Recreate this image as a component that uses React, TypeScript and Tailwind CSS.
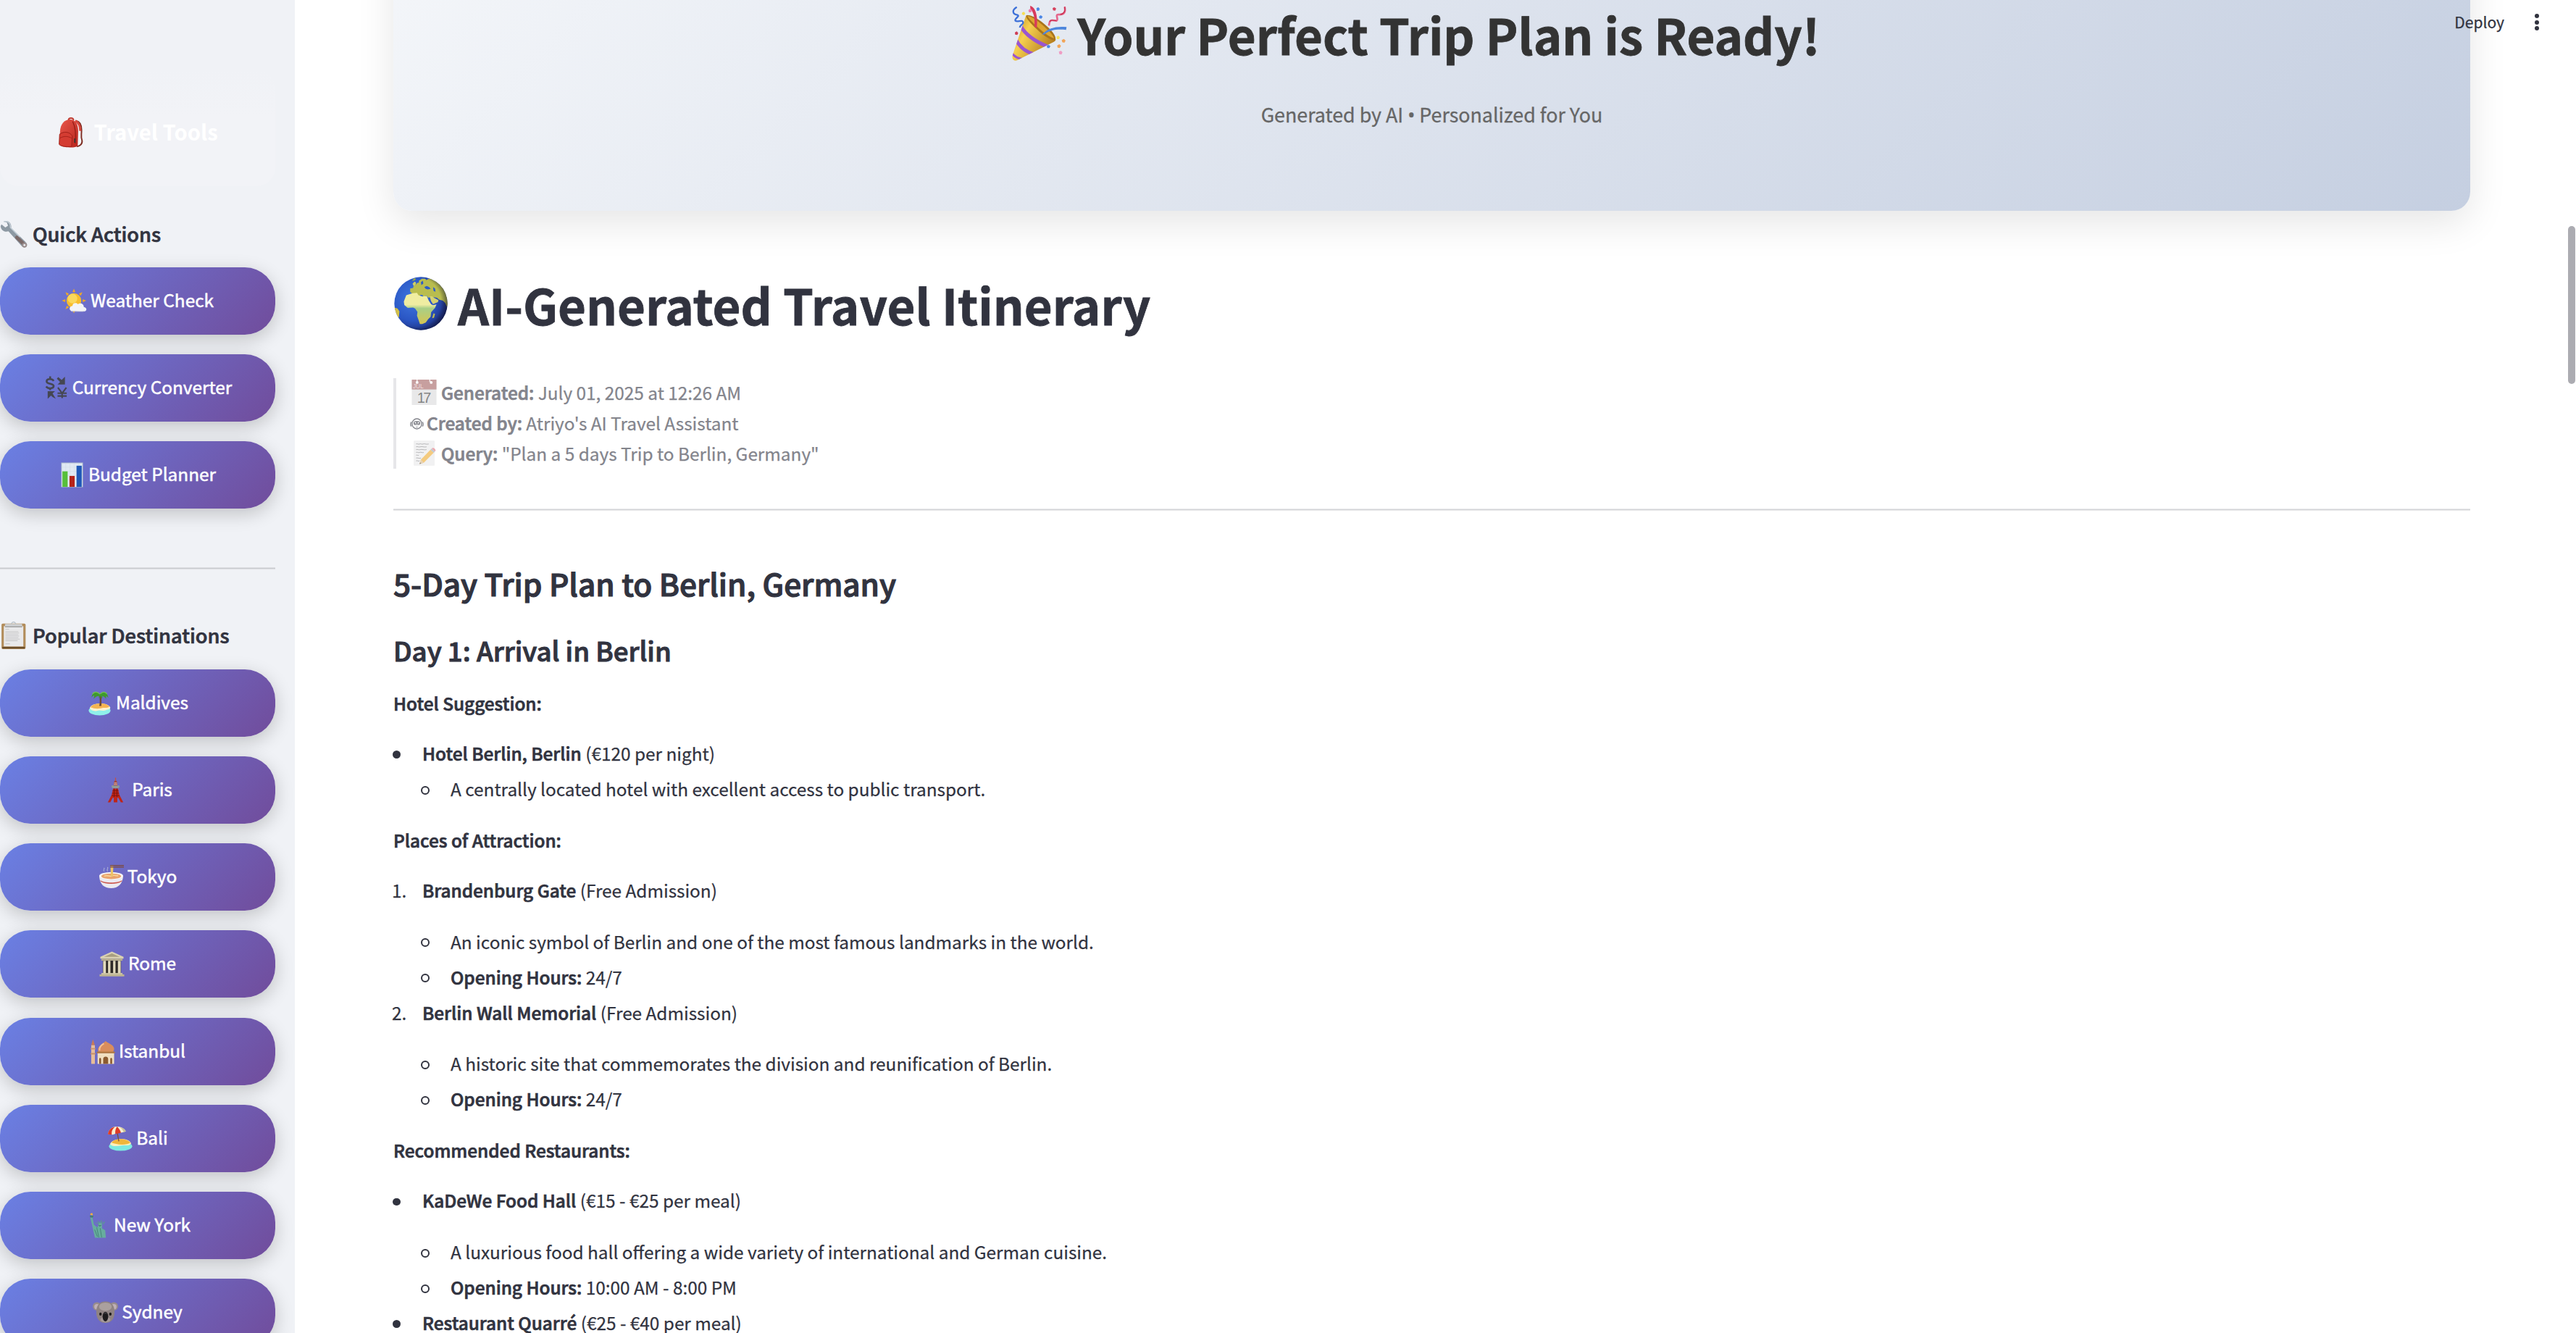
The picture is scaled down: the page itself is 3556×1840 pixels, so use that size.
import type { ReactNode } from "react";

type IconProps = { className?: string };

function Svg({ className, box = "0 0 36 36", children }: IconProps & { box?: string; children: ReactNode }) {
  return (
    <svg viewBox={box} className={className} aria-hidden="true">
      {children}
    </svg>
  );
}

function Backpack({ className }: IconProps) {
  return (
    <Svg className={className}>
      <defs>
        <linearGradient id="bp" x1="0" y1="0" x2="1" y2="1">
          <stop offset="0" stopColor="#e8574c" />
          <stop offset="1" stopColor="#b8241c" />
        </linearGradient>
      </defs>
      <path d="M24 4c5 1 6.500 5 6.500 11 0 6-1 8 .5 12 1 4-2 7-6 7.500" fill="none" stroke="#7c2a20" strokeWidth="1.600" />
      <path d="M23 4c4 2 6 5 6 12" fill="none" stroke="#d8473d" strokeWidth="2.600" />
      <path d="M15 3.500c0-3.500 6-3.500 6 0" fill="none" stroke="#c0392f" strokeWidth="1.600" />
      <path d="M5 18C5 7 11 2.500 17 2.500c6 0 9.500 5 9.500 14L26 33c-1 2-3 2.500-7 2.500-6 0-12-.5-14-3z" fill="url(#bp)" />
      <path d="M4.500 20c5-4 12-3 15 2l-.8 12.500C13 35 6 34.500 4 32z" fill="#d43c32" stroke="#9c1d16" strokeWidth=".8" />
      <path d="M5 24.500c5-3 10-2 13.500 0" fill="none" stroke="#9c1d16" strokeWidth=".7" />
      <path d="M20 5c3 6 4 16 3 26" fill="none" stroke="#8f1b15" strokeWidth="1" />
      <path d="M22.500 25v5" stroke="#3d3330" strokeWidth="1.600" />
    </Svg>
  );
}

function Wrench({ className }: IconProps) {
  return (
    <Svg className={className}>
      <path
        d="M4.500 1.500 9 1c4 1 6.500 5 5.500 9L33 28c3 3 3 5 1.500 6.500S30 36 28 33.500L11 14.500C6 16 1 13 .8 7.500L2 5.500l5 4 3.500-2.500L9 3z"
        fill="#8d99a3"
      />
      <path d="M5 2l4-.5c4 1.500 5 4.500 4.500 8L26 22" fill="none" stroke="#c5d0d9" strokeWidth="1.300" />
      <path d="M22 22.500 31 31" stroke="#7b6a69" strokeWidth="4.500" strokeLinecap="round" />
      <circle cx="32" cy="32.500" r="3.200" fill="#9c8f8f" />
      <circle cx="32" cy="32.500" r="1.300" fill="#eef0f4" />
    </Svg>
  );
}

function SunCloud({ className }: IconProps) {
  return (
    <Svg className={className}>
      <path
        d="M17.500 .5l2 5h-4zM17.500 35.500l2-5h-4zM.3 17.500l5-2v4zM35 17.500l-5-2v4zM5.500 5.500l5 2.200-2.800 2.800zM29.500 5.500l-2.200 5-2.800-2.800zM5.500 29.500l5-2.200-2.800-2.800z"
        fill="#f2a922"
      />
      <circle cx="17.500" cy="17.500" r="10.500" fill="#f8bd2d" />
      <circle cx="15.500" cy="14.500" r="6.800" fill="#fbd85b" />
      <path d="M16 32.500c-6 0-6-7-.5-7.500 0-4 5-5.500 7.500-2.500 4-3 9 0 8.500 4 5 .5 5 6.500 0 6.500z" fill="#f3f4f8" />
      <path d="M13 31.500c3 1.300 16 1.500 20 0-.7 1.500-2 1.700-3 1.700H16c-1.500 0-2.500-.7-3-1.700z" fill="#c9ccd8" />
    </Svg>
  );
}

function CurrencyExchange({ className }: IconProps) {
  return (
    <Svg className={className}>
      <g fill="none" stroke="#454752" strokeWidth="2.700">
        <path d="M14.500 8C12.500 4.500 4.500 4.500 4.500 8.700c0 4.300 10 2.300 10 6.600 0 4-8 4.500-10.700.7M9.500 1.500v4M9.500 18v3" />
        <path d="M20.500 17.500l6 8 6-8M26.500 24v8.500M20 25.500h13M20 29.500h13" strokeWidth="2.200" />
      </g>
      <g fill="#454752">
        <path d="M21 2.500l4.800 4.300L30.500 2v11H20l3.600-3.600L19 5z" />
        <path d="M6 22.500h10.500l-3.600 3.300 4.600 7.700-5-2.800-1.800-1.900L6 33.500z" />
      </g>
    </Svg>
  );
}

function BarChart({ className }: IconProps) {
  return (
    <Svg className={className}>
      <rect x="2.500" y=".5" width="31" height="35" fill="#aebdcc" />
      <rect x="3.500" y="1.500" width="29" height="33.500" fill="#e1eaf3" />
      <path d="M3.500 7h29M3.500 13h29M3.500 19h29M3.500 25h29M9 1.500V35M15 1.500V35M21 1.500V35M27 1.500V35" stroke="#cfdbe7" strokeWidth=".5" />
      <rect x="4.300" y="13" width="7.400" height="22" fill="#57bf3b" />
      <rect x="14.300" y="19.500" width="7.400" height="15.500" fill="#b52419" />
      <rect x="24.300" y="5" width="7.400" height="30" fill="#2059b8" />
    </Svg>
  );
}

function Clipboard({ className }: IconProps) {
  return (
    <Svg className={className}>
      <rect x="2" y="2.500" width="31.500" height="33.500" rx="1.800" fill="#b28d5b" />
      <rect x="3" y="33" width="29.500" height="2.300" fill="#6a4d2a" />
      <rect x="5" y="6" width="25.500" height="26.500" fill="#e9e9ea" />
      <path d="M7 10h5M7 13h17M7 15h18M7 17h17M7 19h18M7 21h17M7 23h19M7 25h16M7 29h6" stroke="#c9c9cb" strokeWidth="1" />
      <rect x="6.500" y="3" width="22.500" height="3.500" rx="1" fill="#cfd2d5" />
      <path d="M6.500 6.800h22.500" stroke="#6f7276" strokeWidth=".8" />
      <path d="M14.500 3c1-.3 1-2.500 3.200-2.500S20 2.700 21 3" fill="none" stroke="#b9c3ca" strokeWidth="1.300" />
    </Svg>
  );
}

function Island({ className }: IconProps) {
  return (
    <Svg className={className}>
      <ellipse cx="18" cy="28.500" rx="15.500" ry="7" fill="#8ff0ea" />
      <path d="M4 25c2-8 25-9 29-1 1 3-3 3-6 4-5 2-8-1-13 1-4 1-9-1-10-4z" fill="#fff3cf" />
      <path d="M5 24c4-6.500 22-7.500 27-1-4 3-7 1-12 2.500-6 1-10 .5-15-1.500z" fill="#f5b452" />
      <path d="M17.500 22c1-5 1-9 0-15l2.500 0c.8 6 .8 10 .5 15z" fill="#6f4b36" />
      <path d="M18 6C14 1 8 2 6.500 10c1.500-2 2.500-2.500 4-2.500L9.500 12c3-3 5-4 7.500-4l0 3 2-3 2.500 4 .5-4c2 .5 4 2 5 4l.3-4c1.500.5 2 1.500 3 2.500C30 4 24 0 18.500 5z" fill="#3f9a2c" />
      <path d="M18 5C15 1.500 10 1.500 8 5M19 5c3-3.500 7-3.500 9.500 0" stroke="#74c94b" strokeWidth="1.300" fill="none" />
    </Svg>
  );
}

function Tower({ className }: IconProps) {
  return (
    <Svg className={className}>
      <path d="M18 .5v6" stroke="#c4523f" strokeWidth="1.300" />
      <path d="M16.300 5h3.400l1.300 7h-6z" fill="#a6473a" />
      <path d="M16 8h4M15.500 10h5" stroke="#ddd" strokeWidth=".8" />
      <path d="M12.500 11.500h11v2l-1.500 2.300h-8l-1.500-2.300z" fill="#8f9a98" />
      <path d="M14.500 16h7l2 9 5.500 10.500h-3.500L22 29h-1.500v6.500h-5V29H14l-3.500 6.500H7L12.500 25z" fill="#bf2418" />
      <path d="M14 19h8M13.300 22.500h9.400M12.300 26h11.400M16 16v12M20 16v12" stroke="#761510" strokeWidth=".9" />
    </Svg>
  );
}

function Noodles({ className }: IconProps) {
  return (
    <Svg className={className}>
      <path d="M8 10c-2-2 1-3 0-5M13 10c-2-2 1-4 0-6" stroke="#b8bfdd" strokeWidth="1" fill="none" />
      <path d="M1 17c1 12 7 17 17 17s16-6 17-17z" fill="#eceaf0" />
      <path d="M2.500 22.500c6 4.500 25 4.500 31 0l-.6 1.900c-7 4.500-22.800 4.500-29.800 0z" fill="#cc5a50" />
      <ellipse cx="18" cy="16.500" rx="17" ry="5.500" fill="#f7f5f5" />
      <ellipse cx="18" cy="17" rx="14" ry="4" fill="#e9a36d" />
      <path d="M8 17c4-3 8 2 12-1 3-1 5 1 8 0" stroke="#f8d79b" strokeWidth="1.500" fill="none" />
      <path d="M17 2.500h4l-.5 14c-1 1-2.500 1-3 0z" fill="#ecc566" />
      <path d="M16.500 1H36v1.300H16.500zM16.500 3.300H36v1.400H16.500z" fill="#7d4a3d" />
    </Svg>
  );
}

function Temple({ className }: IconProps) {
  return (
    <Svg className={className}>
      <path d="M18 .5 34.500 8v2.500h-33V8z" fill="#d9d1b2" />
      <path d="M18 3l11 5H7z" fill="#a89e80" />
      <path d="M3 10.500h30v3H3z" fill="#b9b08f" />
      <path d="M5 13.500h26v18H5z" fill="#2e2a26" />
      <path d="M5.500 13.500h4v18h-4zM12.500 13.500h3.400v18h-3.400zM19.700 13.500h3.400v18h-3.400zM26.500 13.500h4v18h-4z" fill="#e2dabd" />
      <path d="M3 31h30v2H3z" fill="#cfc6a5" />
      <path d="M.5 33h35v2.800H.5z" fill="#beb592" />
    </Svg>
  );
}

function Mosque({ className }: IconProps) {
  return (
    <Svg className={className}>
      <path d="M4.500.5 7 9H2z" fill="#c97a55" />
      <path d="M2 9h5.200v26.500H2z" fill="#e7bd98" />
      <path d="M1 13h7v2H1zM1 20h7v2H1z" fill="#c6906c" />
      <path d="M22.500 3c1 2 12 5 12 11 0 2-.6 3-1.600 4.500H12.500C8.500 11 20 6 22.500 3z" fill="#d98d5c" />
      <path d="M20 6.500c-5 3-7 6-6 10" fill="none" stroke="#f3c094" strokeWidth="2.200" />
      <path d="M10 18h25.500v2.500H10z" fill="#b37a43" />
      <path d="M11 20.500h23.500v15H11z" fill="#f1dfc0" />
      <path d="M19 35.500V28.500c0-4.500 7-4.500 7 0v7zM13.300 35.500v-6.500c0-2.500 2.700-2.500 2.700 0v6.500zM29 35.500v-6.500c0-2.500 2.700-2.500 2.700 0v6.500z" fill="#8b5a30" />
    </Svg>
  );
}

function Beach({ className }: IconProps) {
  return (
    <Svg className={className}>
      <ellipse cx="19" cy="29" rx="16.500" ry="6.500" fill="#7de9e0" />
      <path d="M4 26c3-9 27-10 30-1-3 5-8 1-14 3-6 1-13 2-16-2z" fill="#fff0be" />
      <path d="M6 24c5-7 21-7 27 0-6 4-20 3-27 0z" fill="#f0b63b" />
      <path d="M14 8l2.500 14" stroke="#7b4a3a" strokeWidth="1.300" />
      <path d="M1 12C2 4 8 1 14 1c6 0 11 3 12.500 7L21 9.500 15 10 8 12.500z" fill="#f7efd2" />
      <path d="M1 12C2 5 6 2.500 11 1.500 7 5 6 8 6.500 12.500zM14 1c3 3 5 6 5.500 9l-8 1.500C11 7 12 4 14 1z" fill="#dd3a26" />
      <path d="M17 1.500c4 1 8.500 3 9.500 6.500L23.500 9C22 5 20 3 17 1.500z" fill="#c9c394" />
    </Svg>
  );
}

function Liberty({ className }: IconProps) {
  return (
    <Svg className={className}>
      <path d="M8 3c-1-2 2-3 3-2l.5 2.500z" fill="#f2b23c" />
      <path d="M7 4h5.500l-1 3H8z" fill="#477e74" />
      <path d="M8 7h3l2 10 5 4 1.500-4c-1-4 5-4 5 0v5l4.500 3 1 10.500H14.500L12 25z" fill="#67ad9e" />
      <path d="M15 14l5 2-1-4 3 3 1.500-4 .8 4 4-2-2.500 4" fill="none" stroke="#5a9c8f" strokeWidth=".9" />
      <path d="M17 21l3 14M22 22l2 13M14 24l4 10" stroke="#3f7a70" strokeWidth=".8" fill="none" />
      <path d="M20 17.500c1 2 2 2 3 0" fill="none" stroke="#2f5f57" strokeWidth=".9" />
    </Svg>
  );
}

function Koala({ className }: IconProps) {
  return (
    <Svg className={className}>
      <circle cx="6" cy="9.500" r="6" fill="#978b8d" />
      <circle cx="30" cy="9.500" r="6" fill="#978b8d" />
      <circle cx="6" cy="10" r="3.800" fill="#bfb0b5" />
      <circle cx="30" cy="10" r="3.800" fill="#bfb0b5" />
      <path d="M18 2.500c9 0 13 6.500 13 15S27 33 18 33 5 26 5 17.500 9 2.500 18 2.500z" fill="#8f8383" />
      <ellipse cx="18" cy="10" rx="9" ry="6" fill="#aaa09e" />
      <ellipse cx="18" cy="28.500" rx="7" ry="3.800" fill="#a69a9a" />
      <ellipse cx="18" cy="24" rx="4" ry="6.800" fill="#1d1b1e" />
      <ellipse cx="11" cy="20.500" rx="1.800" ry="2.200" fill="#1d1b1e" />
      <ellipse cx="25" cy="20.500" rx="1.800" ry="2.200" fill="#1d1b1e" />
      <path d="M16.500 20c.5-1.500 2.500-1.500 3 0" stroke="#5b585e" strokeWidth="1" fill="none" />
    </Svg>
  );
}

function PartyPopper({ className }: IconProps) {
  return (
    <Svg className={className} box="0 0 228 228">
      <defs>
        <linearGradient id="cone" x1="0" y1="0" x2="1" y2=".6">
          <stop offset="0" stopColor="#b8801f" />
          <stop offset=".4" stopColor="#f6d050" />
          <stop offset="1" stopColor="#b27a1c" />
        </linearGradient>
        <clipPath id="coneClip">
          <path d="M58 40C62 36 70 38 80 46L178 132C184 140 180 146 172 150L24 224C10 232 -2 224 2 206Z" />
        </clipPath>
      </defs>
      <path d="M58 40C62 36 70 38 80 46L178 132C184 140 180 146 172 150L24 224C10 232 -2 224 2 206Z" fill="url(#cone)" />
      <g clipPath="url(#coneClip)" stroke="#9a55d0" strokeWidth="15" fill="none">
        <path d="M36 84C54 116 92 146 146 168" />
        <path d="M16 140C30 168 52 190 92 200" strokeWidth="14" />
        <path d="M0 196C8 210 20 218 50 222" strokeWidth="9" />
      </g>
      <path d="M60 40C76 34 112 54 148 88C174 112 186 134 178 142C164 146 130 124 102 96C76 72 54 48 60 40Z" fill="#a9741c" />
      <path d="M64 42C82 44 108 62 140 92C160 110 172 126 174 134C156 130 130 110 104 86C84 68 66 50 64 42Z" fill="#dda52f" />
      <path d="M75 0C92 4 100 24 103 48C105 64 104 78 102 92L93 86C95 56 92 30 76 12Z" fill="#d83a5c" />
      <path d="M124 120C146 92 184 84 226 88L224 100C188 96 156 100 136 118Z" fill="#4d86dc" />
      <path d="M20 5C-2 18 2 34 22 38C36 42 8 54 14 62C22 70 46 54 46 70C46 80 34 76 32 90" stroke="#3d70d8" strokeWidth="7" fill="none" />
      <path d="M218 4C224 28 214 38 192 36C176 36 196 58 184 62C168 62 156 50 153 82" stroke="#e5668c" strokeWidth="8" fill="none" />
      <path d="M218 4C222 24 214 34 200 36M184 62C172 62 160 54 156 66" stroke="#c93350" strokeWidth="4" fill="none" />
      <path d="M101 10l8-4 6 6-3 8-9 1z" fill="#4a86e6" />
      <path d="M68 18l7-6 8 6-4 9-9 0z" fill="#ec7fae" />
      <path d="M112 44l7-5 8 6-5 8-9-1z" fill="#4a86e6" />
      <path d="M42 28l8-3 5 7-5 7-9-3z" fill="#f6de56" />
      <path d="M168 10l7-4 8 5-4 9-9-1z" fill="#d6415c" />
      <path d="M12 110l8-4 6 7-4 8-9-2z" fill="#cf3d53" />
      <path d="M144 166l8-5 7 6-4 8-9 0z" fill="#4a86e6" />
      <path d="M184 128l8-4 6 6-3 8-9 0z" fill="#f7e45d" />
      <path d="M206 142l9-5 7 7-5 9-9-2z" fill="#f2a558" />
      <path d="M187 164l9-5 7 7-5 9-9-2z" fill="#f2a558" />
      <path d="M194 190l9-4 6 7-4 9-9-2z" fill="#ef9dc4" />
    </Svg>
  );
}

function Globe({ className }: IconProps) {
  return (
    <Svg className={className} box="0 0 220 220">
      <defs>
        <radialGradient id="sea" cx=".35" cy=".4" r=".7">
          <stop offset="0" stopColor="#3f78e0" />
          <stop offset=".6" stopColor="#2a56c4" />
          <stop offset="1" stopColor="#1d2a72" />
        </radialGradient>
        <radialGradient id="shade" cx=".42" cy=".47" r=".62">
          <stop offset=".74" stopColor="#0a0c28" stopOpacity="0" />
          <stop offset="1" stopColor="#0a0c28" stopOpacity=".7" />
        </radialGradient>
        <linearGradient id="land" x1="0" y1="0" x2="0" y2="1">
          <stop offset="0" stopColor="#f0eea0" />
          <stop offset=".38" stopColor="#f0eda2" />
          <stop offset=".5" stopColor="#a9cf86" />
          <stop offset="1" stopColor="#d6c552" />
        </linearGradient>
        <clipPath id="disc">
          <circle cx="110" cy="110" r="109" />
        </clipPath>
      </defs>
      <circle cx="110" cy="110" r="109" fill="url(#sea)" />
      <g clipPath="url(#disc)">
        <path
          d="M66 62l0-14 12-2 2-8 8-4 6-8 8-2 0-8 12-8 14 0 4 6 10-6 20 2 30 18 22 28 14 34 0 30-12 2-6-14-10-10-16-4-8-8-12-2-6 2-10-2-8 2-6-8-6 0 0 8-6-2-6-10-8 0-6 6-8 6z"
          fill="#b9bd4e"
        />
        <path d="M76 28l8-8 6 4-2 10-8 4z" fill="#cfd064" />
        <path d="M124 42l10-4 10 4 6 8-12 2-8-2zM160 42l8 6 2 14-8-4zM110 22l8-6 2 12-8 6z" fill="#2d5cc8" />
        <path
          d="M50 76l26-8 18-2 6 10 16 5 18-2 8 18 10 16 8 4 14-3-6 14-16 18-2 18-10 10-10 14-14 6-10 0-6-18-6-16 2-16-10-14-8-4-22 2-14-12-2-14z"
          fill="url(#land)"
        />
        <path d="M146 80l10 0 10 8 16 8-2 8-20 8-8-12z" fill="#d5d272" />
        <path d="M162 150l6 2-4 16-8 2z" fill="#bdbb55" />
        <path d="M0 126l14 4 8 12-2 22-10 12z" fill="#d3c047" />
        <path d="M80 8l10-2-4 8-12 4z" fill="#9dac48" />
      </g>
      <circle cx="110" cy="110" r="109" fill="url(#shade)" />
    </Svg>
  );
}

function Calendar({ className }: IconProps) {
  return (
    <Svg className={className}>
      <rect x=".5" y="1" width="35" height="35" fill="#d9dadb" />
      <rect x=".5" y="0" width="35" height="14" fill="#a26160" />
      <circle cx="8" cy="4" r="2" fill="#fff" />
      <circle cx="28" cy="4" r="2" fill="#fff" />
      <path d="M8 0v3M26 0v3" stroke="#fff" strokeWidth="1.200" />
      <text x="2" y="12.500" fontSize="8.500" fill="#e7c9c9" fontFamily="Liberation Sans">JUL</text>
      <text x="18" y="32.500" fontSize="20.500" textAnchor="middle" fill="#333" fontFamily="Liberation Sans" textLength="20">17</text>
    </Svg>
  );
}

function RobotFace({ className }: IconProps) {
  return (
    <Svg className={className} box="0 0 38 32">
      <g fill="none" stroke="#31333f" strokeWidth="2.800">
        <rect x="6" y="2" width="26" height="28" rx="13" />
        <path d="M4 11c-3 2-3 10 0 12M34 11c3 2 3 10 0 12" />
      </g>
      <rect x="10" y="8.500" width="18" height="11" rx="5" fill="#31333f" />
      <circle cx="15" cy="13" r="2.200" fill="#fff" />
      <circle cx="23" cy="13" r="2.200" fill="#fff" />
      <path d="M15 17.500h8" stroke="#fff" strokeWidth="1.300" />
      <path d="M17 25h4" stroke="#31333f" strokeWidth="2" />
    </Svg>
  );
}

function Memo({ className }: IconProps) {
  return (
    <Svg className={className}>
      <rect x="3.500" y=".5" width="29" height="35" fill="#dadadb" />
      <rect x="4" y="1" width="28" height="34" fill="#e9e9ea" />
      <path
        d="M6.500 5c2-1 3 1 5 0s3 1 5 0 4 1 8 0M6.500 9c3-1 3 1 6 0s5 1 9 0M6.500 13c2-1 4 1 6 0s6 1 9 0M6.500 17c2-1 3 1 5 0s4 1 6 0M6.500 21c2-1 2 1 4 0M6.500 25c2-1 3 1 7 0M6.500 29c2-1 3 1 5 0"
        fill="none"
        stroke="#6a6a6e"
        strokeWidth=".8"
      />
      <path d="M11.500 33.500l2-6.500L27 13l4.500 4.500L17.500 31.500z" fill="#eda92b" />
      <path d="M11.500 33.500l2-6.500 4 4.500z" fill="#d8b98a" />
      <path d="M11.500 33.500l.8-2.500 1.500 1.600z" fill="#333" />
      <path d="M27 13l1.800-1.800 4.500 4.500-1.800 1.800z" fill="#9aa6b0" />
      <path d="M28.800 11.200c2-2.500 7.500 2 4.500 4.500z" fill="#e0707a" />
    </Svg>
  );
}

function SideButton({ icon: Icon, label }: { icon: (p: IconProps) => ReactNode; label: string }) {
  return (
    <button className="flex h-[93px] w-[380px] shrink-0 items-center justify-center gap-[5px] rounded-[42px] bg-[linear-gradient(135deg,#6a80e4_0%,#714c9b_100%)] text-[24.400px] leading-[45px] text-white shadow-[0_7px_26px_rgba(0,0,0,0.2)]">
      <Icon className="size-[35px]" />
      <span className="-mt-[4px] [-webkit-text-stroke:0.5px_white]">{label}</span>
    </button>
  );
}

function SideHeading({ icon: Icon, children }: { icon: (p: IconProps) => ReactNode; children: ReactNode }) {
  return (
    <h3 className="flex h-[42px] items-center gap-[7px] text-[27.200px] leading-[42px] font-medium [-webkit-text-stroke:0.7px_#31333f]">
      <Icon className="size-[38px]" />
      <span className="-mt-[2px]">{children}</span>
    </h3>
  );
}

const quickActions = [
  { icon: SunCloud, label: "Weather Check" },
  { icon: CurrencyExchange, label: "Currency Converter" },
  { icon: BarChart, label: "Budget Planner" },
];

const destinations = [
  { icon: Island, label: "Maldives" },
  { icon: Tower, label: "Paris" },
  { icon: Noodles, label: "Tokyo" },
  { icon: Temple, label: "Rome" },
  { icon: Mosque, label: "Istanbul" },
  { icon: Beach, label: "Bali" },
  { icon: Liberty, label: "New York" },
  { icon: Koala, label: "Sydney" },
];

function Sidebar() {
  return (
    <aside className="flex h-full w-[407px] shrink-0 flex-col overflow-hidden bg-[#f0f2f6]">
      <div className="mt-[96px] flex h-[161px] w-[380px] shrink-0 items-center justify-center gap-[10px] rounded-[26px] bg-[linear-gradient(180deg,#f0f2f6_0%,#f2f3f7_40%)] pt-[12px] text-[29.200px] leading-[48px] font-bold text-white">
        <Backpack className="-ml-[2px] size-[42px]" />
        <span className="-mt-[3px]">Travel Tools</span>
      </div>
      <div className="mt-[45px]">
        <SideHeading icon={Wrench}>Quick Actions</SideHeading>
      </div>
      <div className="mt-[25px] flex flex-col gap-[27px]">
        {quickActions.map((a) => (
          <SideButton key={a.label} {...a} />
        ))}
      </div>
      <hr className="mt-[81px] h-[3px] w-[380px] shrink-0 border-y border-[#dddee2] bg-[#c9cbcf]" />
      <div className="mt-[70px]">
        <SideHeading icon={Clipboard}>Popular Destinations</SideHeading>
      </div>
      <div className="mt-[26px] flex flex-col gap-[27.150px]">
        {destinations.map((d) => (
          <SideButton key={d.label} {...d} />
        ))}
      </div>
    </aside>
  );
}

function Strong({ children }: { children: ReactNode }) {
  return <strong className="font-medium [-webkit-text-stroke:0.7px_currentColor]">{children}</strong>;
}

function Row({ marker, children }: { marker: ReactNode; children: ReactNode }) {
  return (
    <div className="flex">
      <span className="flex w-[40px] shrink-0 items-center">{marker}</span>
      <span>{children}</span>
    </div>
  );
}

const Disc = () => <span className="-ml-px mt-[4px] size-[10.500px] rounded-full bg-[#31333f]" />;
const Ring = () => <span className="-ml-px mt-[4px] size-[12px] rounded-full border-2 border-[#31333f]" />;

function SubList({ items, loose }: { items: ReactNode[]; loose?: boolean }) {
  return (
    <ul className={loose ? "mt-[25.700px] ml-[39px] flex flex-col gap-[4px]" : "mt-[4px] ml-[39px] flex flex-col gap-[4px]"}>
      {items.map((item, i) => (
        <li key={i}>
          <Row marker={<Ring />}>{item}</Row>
        </li>
      ))}
    </ul>
  );
}

function Itinerary() {
  return (
    <section className="text-[24.350px] leading-[45px] [-webkit-text-stroke:0.25px_currentColor]">
      <h2 className="mt-[71px] text-[42.300px] leading-[58px] font-medium [-webkit-text-stroke:1.2px_#31333f]">
        5-Day Trip Plan to Berlin, Germany
      </h2>
      <h3 className="mt-[38px] text-[36.650px] leading-[50px] font-medium [-webkit-text-stroke:1px_#31333f]">
        Day 1: Arrival in Berlin
      </h3>
      <p className="mt-[26px]">
        <Strong>Hotel Suggestion:</Strong>
      </p>
      <ul className="mt-[24px]">
        <li>
          <Row marker={<Disc />}>
            <Strong>Hotel Berlin, Berlin</Strong> (€120 per night)
          </Row>
          <SubList items={["A centrally located hotel with excellent access to public transport."]} />
        </li>
      </ul>
      <p className="mt-[26px]">
        <Strong>Places of Attraction:</Strong>
      </p>
      <ol className="mt-[24px] flex flex-col gap-[4px]">
        <li>
          <Row marker={<span className="-ml-[2px]">1.</span>}>
            <Strong>Brandenburg Gate</Strong> (Free Admission)
          </Row>
          <SubList
            loose
            items={[
              "An iconic symbol of Berlin and one of the most famous landmarks in the world.",
              <>
                <Strong>Opening Hours:</Strong> 24/7
              </>,
            ]}
          />
        </li>
        <li>
          <Row marker={<span className="-ml-[2px]">2.</span>}>
            <Strong>Berlin Wall Memorial</Strong> (Free Admission)
          </Row>
          <SubList
            loose
            items={[
              "A historic site that commemorates the division and reunification of Berlin.",
              <>
                <Strong>Opening Hours:</Strong> 24/7
              </>,
            ]}
          />
        </li>
      </ol>
      <p className="mt-[26px]">
        <Strong>Recommended Restaurants:</Strong>
      </p>
      <ul className="mt-[24px] flex flex-col gap-[4px]">
        <li>
          <Row marker={<Disc />}>
            <Strong>KaDeWe Food Hall</Strong> (€15 - €25 per meal)
          </Row>
          <SubList
            loose
            items={[
              "A luxurious food hall offering a wide variety of international and German cuisine.",
              <>
                <Strong>Opening Hours:</Strong> 10:00 AM - 8:00 PM
              </>,
            ]}
          />
        </li>
        <li>
          <Row marker={<Disc />}>
            <Strong>Restaurant Quarré</Strong> (€25 - €40 per meal)
          </Row>
        </li>
      </ul>
    </section>
  );
}

export default function App() {
  return (
    <div className="relative flex h-[1840px] w-[3556px] overflow-hidden bg-white font-['Noto_Sans_CJK_SC',sans-serif] text-[#31333f]">
      <Sidebar />
      <main className="ml-[136px] w-[2867px]">
        <header className="-mt-[160px] flex h-[451px] flex-col items-center justify-end rounded-[26px] bg-[linear-gradient(135deg,#f5f7fa_0%,#c5cfe1_100%)] pb-[108px] shadow-[0_17px_52px_rgba(0,0,0,0.1)]">
          <h1 className="mr-[43px] flex items-start gap-[14px] text-[67.100px] leading-[92px] font-bold whitespace-nowrap text-[#333] [-webkit-text-stroke:0.8px_#333]">
            <PartyPopper className="mt-[7px] size-[76px]" />
            Your Perfect Trip Plan is Ready!
          </h1>
          <p className="mt-[41px] text-[26.800px] leading-[48px] text-[#666] [-webkit-text-stroke:0.3px_#666]">
            Generated by AI <span className="font-['Noto_Sans']">•</span> Personalized for You
          </p>
        </header>
        <h1 className="mt-[83px] flex items-start gap-[14px] text-[67.100px] leading-[92px] font-bold [-webkit-text-stroke:0.8px_#31333f]">
          <Globe className="mt-[8px] ml-px size-[74px]" />
          AI-Generated Travel Itinerary
        </h1>
        <blockquote className="mt-[56px] flex h-[125px] flex-col border-l-4 border-[#e6e6e9] text-[24.350px] leading-[42px] text-[#83848c] [-webkit-text-stroke:0.25px_currentColor]">
          <div className="-mt-px flex flex-col">
            <p className="flex">
              <Calendar className="mt-[3px] mr-[6px] ml-[21px] size-[35px] opacity-60" />
              <span>
                <Strong>Generated:</Strong> July 01, 2025 at 12:26 AM
              </span>
            </p>
            <p className="flex">
              <RobotFace className="mt-[14px] mr-[4px] ml-[19px] h-[16px] w-[19px] opacity-60" />
              <span>
                <Strong>Created by:</Strong> Atriyo's AI Travel Assistant
              </span>
            </p>
            <p className="flex">
              <Memo className="mt-[3px] mr-[6px] ml-[21px] size-[35px] opacity-60" />
              <span>
                <Strong>Query:</Strong> "Plan a 5 days Trip to Berlin, Germany"
              </span>
            </p>
          </div>
        </blockquote>
        <hr className="mt-[55px] h-[3px] border-y border-[#e8e8ea] bg-[#d3d4d7]" />
        <Itinerary />
      </main>
      <div className="absolute top-0 right-0 flex items-start">
        <span className="mt-[7px] mr-[42px] text-[21px] leading-[46px] [-webkit-text-stroke:0.25px_#31333f]">Deploy</span>
        <span className="mt-[19px] mr-[51px] flex flex-col gap-[2.500px]">
          <span className="size-[6px] rounded-full bg-[#31333f]" />
          <span className="size-[6px] rounded-full bg-[#31333f]" />
          <span className="size-[6px] rounded-full bg-[#31333f]" />
        </span>
      </div>
      <div className="absolute top-[312px] right-px h-[218px] w-[10px] rounded-full bg-[#acacb2]" />
    </div>
  );
}
